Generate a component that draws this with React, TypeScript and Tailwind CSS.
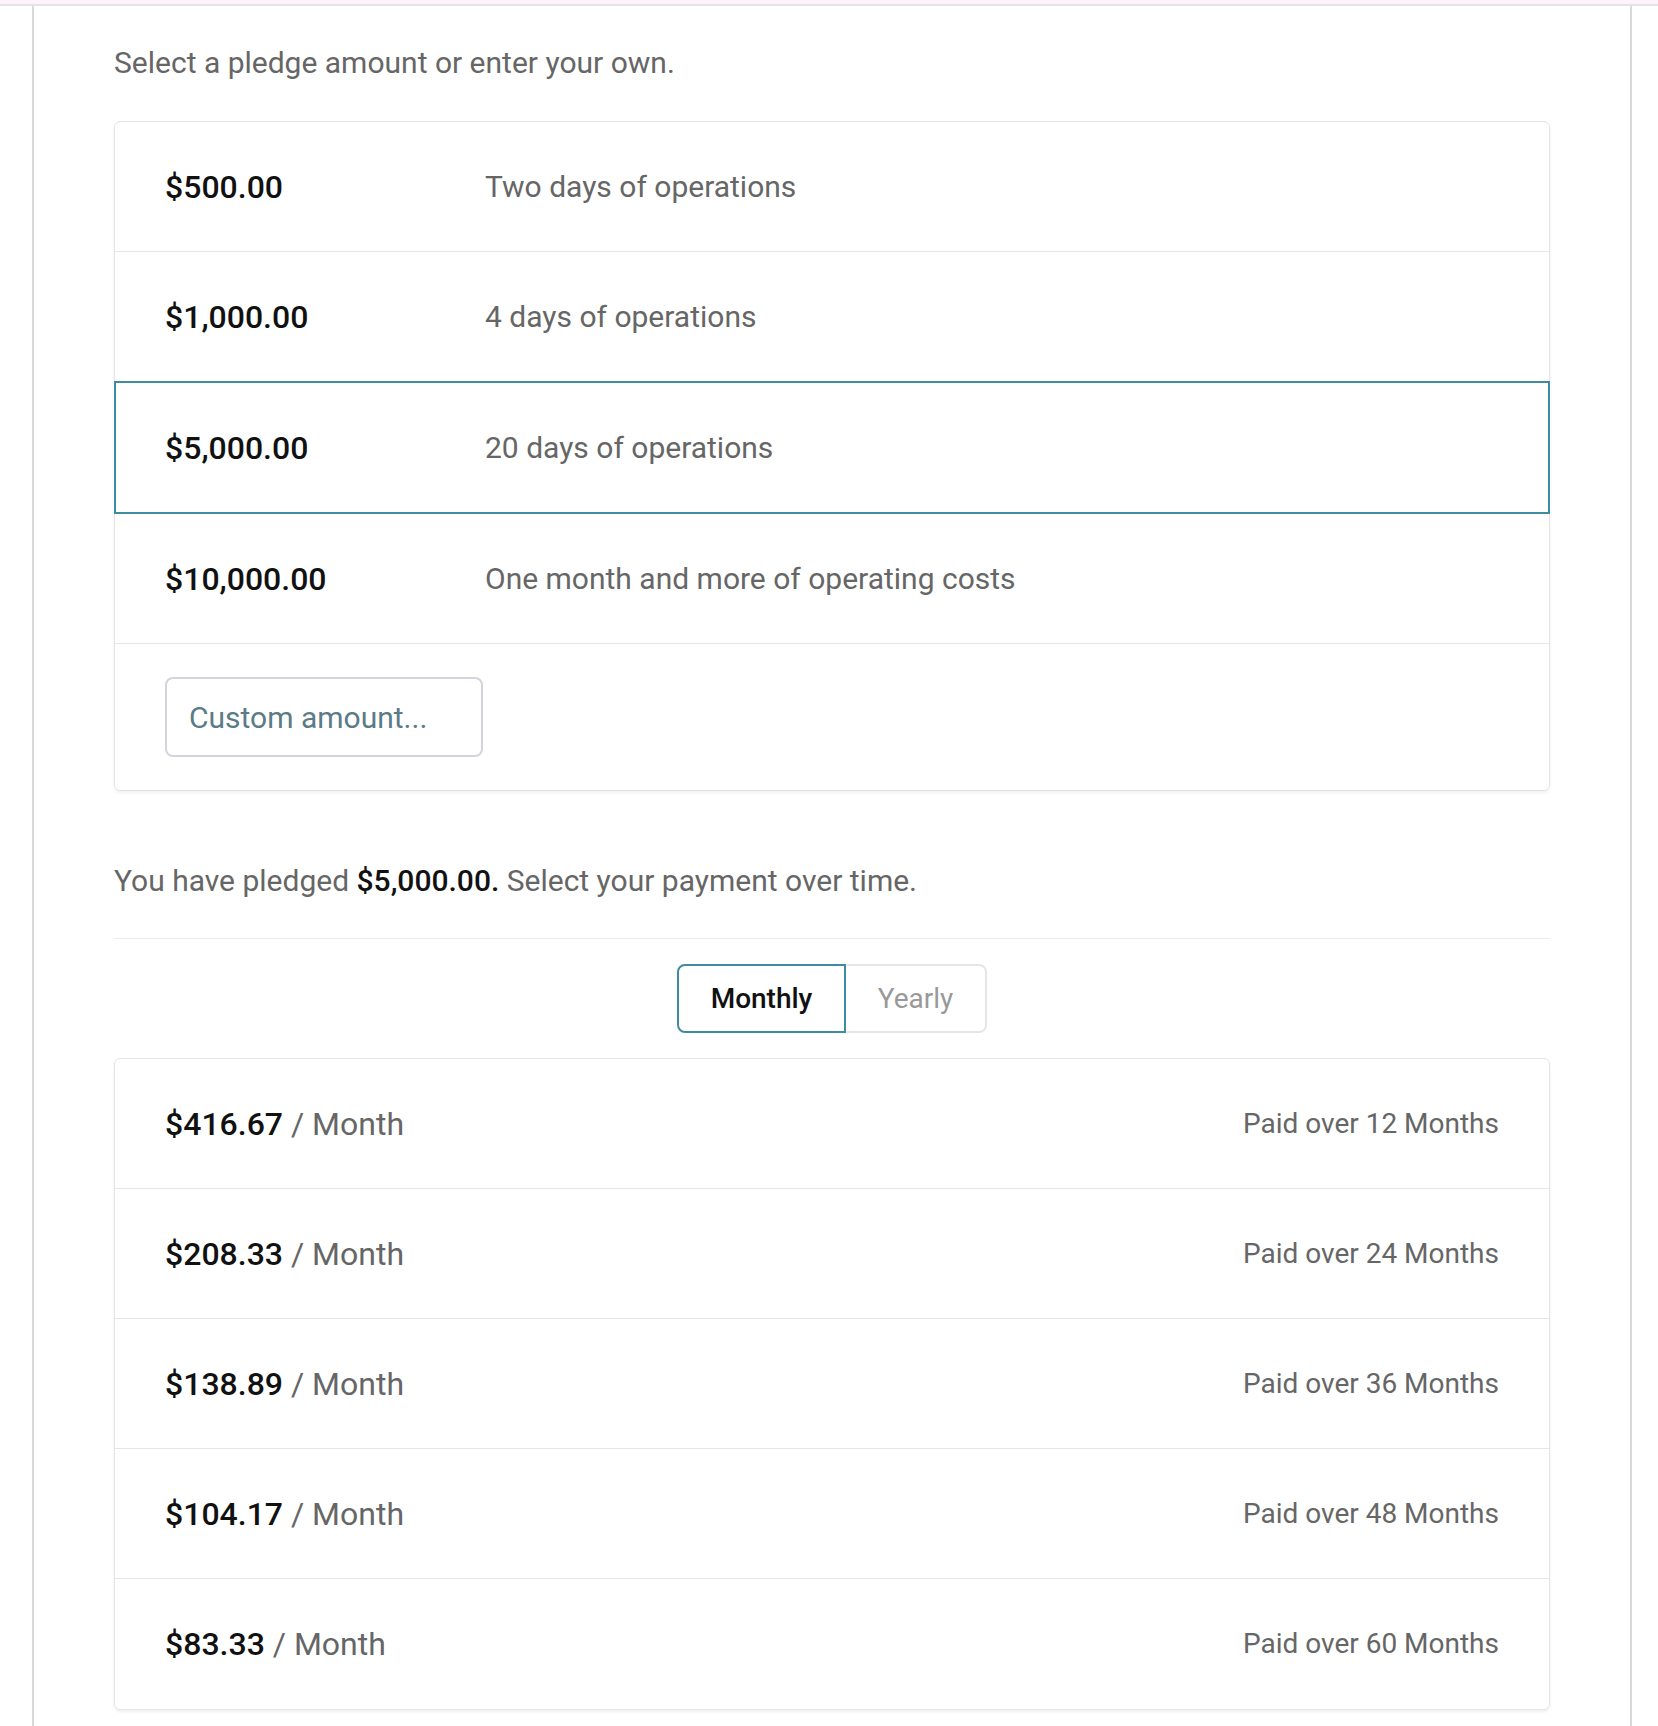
const pledges = [
  { amount: '$500.00', label: 'Two days of operations' },
  { amount: '$1,000.00', label: '4 days of operations' },
  { amount: '$5,000.00', label: '20 days of operations', selected: true },
  { amount: '$10,000.00', label: 'One month and more of operating costs' },
];

const plans = [
  { amount: '$416.67', months: 12 },
  { amount: '$208.33', months: 24 },
  { amount: '$138.89', months: 36 },
  { amount: '$104.17', months: 48 },
  { amount: '$83.33', months: 60 },
];

export default function App() {
  return (
    <div className="min-h-[1726px] bg-white font-['Roboto','Liberation_Sans',sans-serif]">
      <div className="h-[6px] bg-[#fbf4fb] border-b-2 border-[#e6e2e8]" />
      <div className="ml-[32px] w-[1600px] min-h-[1720px] border-x-2 border-[#dadada] px-[80px] pt-[36px]">
        <p className="text-[30px] leading-[42px] text-[#666]">Select a pledge amount or enter your own.</p>

        <div className="mt-[37px] rounded-md border border-[#e4e4e4] shadow-[0_2px_3px_rgba(0,0,0,0.06)] divide-y divide-[#e6e6e6]">
          {pledges.map((p) => (
            <div
              key={p.amount}
              className={`relative flex items-center px-[50px] ${p.selected ? 'h-[132px]' : 'h-[130px]'}`}
            >
              {p.selected && (
                <div className="absolute -inset-x-px -top-px -bottom-px border-2 border-[#3f8ca1]" />
              )}
              <span className="w-[320px] text-[32px] font-medium text-[#111]">{p.amount}</span>
              <span className="text-[30px] text-[#666]">{p.label}</span>
            </div>
          ))}
          <div className="px-[50px] py-[33px]">
            <div className="flex h-[80px] w-[318px] items-center rounded-lg border-2 border-[#d2d6dc] pl-[22px] text-[30px] text-[#5b7b86]">
              Custom amount...
            </div>
          </div>
        </div>

        <p className="mt-[69px] text-[30px] leading-[42px] text-[#666]">
          You have pledged <span className="font-medium text-[30px] text-[#111]">$5,000.00.</span> Select your payment over time.
        </p>

        <div className="mt-[36px] border-t border-[#ececec] pt-[25px]">
          <div className="flex justify-center">
            <div className="flex h-[69px] w-[169px] items-center justify-center rounded-l-lg border-2 border-[#3f8ca1] text-[28px] font-medium text-[#111]">
              Monthly
            </div>
            <div className="flex h-[69px] w-[141px] items-center justify-center rounded-r-lg border-2 border-l-0 border-[#e6e6e6] text-[28px] text-[#999]">
              Yearly
            </div>
          </div>
        </div>

        <div className="mt-[25px] rounded-md border border-[#e4e4e4] shadow-[0_2px_3px_rgba(0,0,0,0.06)] divide-y divide-[#e6e6e6]">
          {plans.map((p) => (
            <div key={p.months} className="flex h-[130px] items-center justify-between px-[50px]">
              <span className="text-[32px]">
                <span className="font-medium text-[#111]">{p.amount}</span>
                <span className="text-[#666]"> / Month</span>
              </span>
              <span className="text-[28px] text-[#666]">Paid over {p.months} Months</span>
            </div>
          ))}
        </div>
      </div>
    </div>
  );
}
